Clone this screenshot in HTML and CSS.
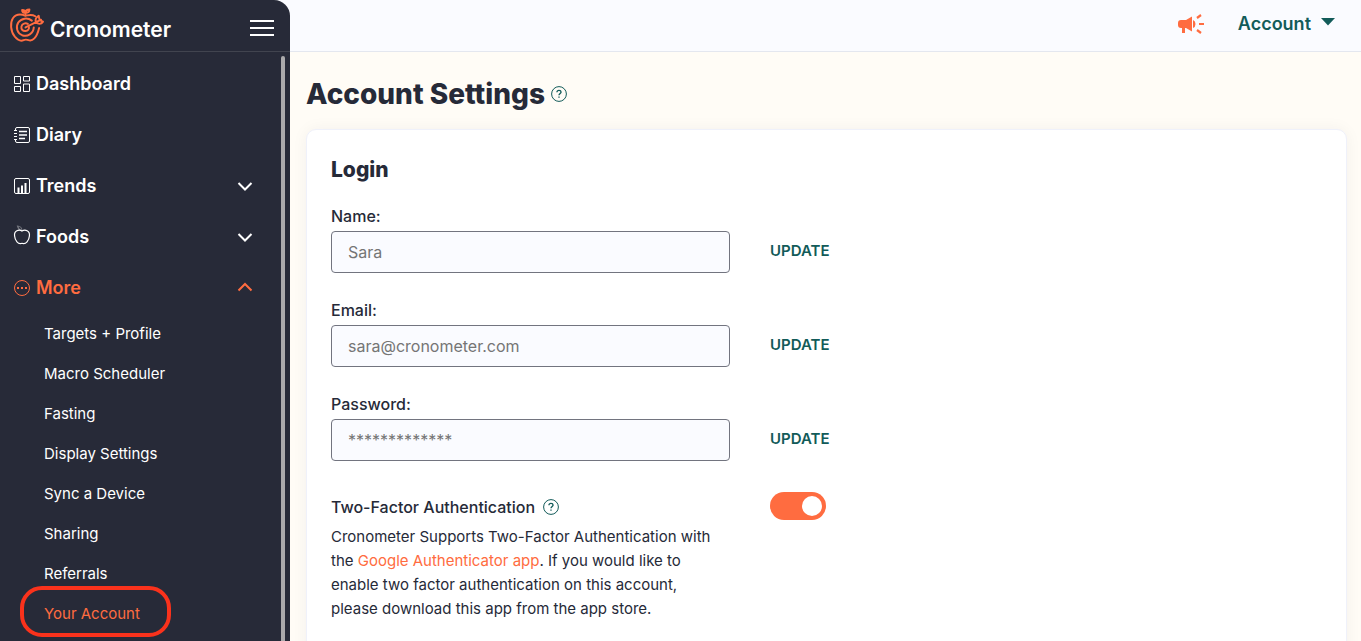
FILE: index.html
```
<!DOCTYPE html>
<html lang="en">
<head>
    <meta charset="UTF-8">
    <meta name="viewport" content="width=device-width, initial-scale=1.0">
    <title>Cronometer - Account Settings</title>
    <link rel="stylesheet" href="styles.css">
</head>
<body>
    <div class="app">
        <aside class="sidebar">
            <div class="sidebar-header">
                <a class="brand" href="#">
                    <svg class="brand-icon" viewBox="0 0 36 36" fill="none" stroke="currentColor" stroke-width="2" stroke-linecap="round" stroke-linejoin="round">
                        <path d="M27 8.5C23 6 20 7.5 17 8C12 6 7 6.500 4 10.500C1 15 1.500 24 6 29.500C9 33 12 34.500 15 33C17 32.200 18.500 32.500 20 33C24 34.500 28.500 31 31 20.500"/>
                        <path d="M17 7.500V4M17 5C14.500 5 13.500 3.500 13.500 2C15.500 2 17 3 17 5C17 3 18.500 1.500 21 1.500C21 3.500 19.500 5 17 5"/>
                        <path d="M23.500 13C19 9.500 12.500 10.500 9.500 15C6.500 20 8.500 26 13.500 28C19 30 25 26.500 25.500 20"/>
                        <path d="M19.500 16.500C17 14.800 13.500 16 12.800 19C12.200 22 14.500 24 17 23.700C19.500 23.300 21 21.500 20.500 19.500"/>
                        <path d="M17 20L33 12M28 14.500C26.500 12.500 27.500 9.500 30.500 8L31.500 12.500L35 14C33 17 30 17 28 14.500Z"/>
                    </svg>
                    <span>Cronometer</span>
                </a>
                <button class="menu-toggle" type="button" aria-label="Toggle menu">
                    <span></span>
                    <span></span>
                    <span></span>
                </button>
            </div>

            <nav class="nav">
                <a class="nav-item" href="#">
                    <svg class="nav-icon" viewBox="0 0 16 16" fill="none" stroke="currentColor">
                        <path d="M.5.500h6v7h-6zM9.500.500h6v4.500h-6zM.5 10.500h6v5h-6zM9.500 8h6v7.500h-6z"/>
                    </svg>
                    <span>Dashboard</span>
                </a>
                <a class="nav-item" href="#">
                    <svg class="nav-icon" viewBox="0 0 16 16" fill="none" stroke="currentColor">
                        <path d="M1.500 3V2Q1.500.500 3 .5H14Q15.500.500 15.500 2V14Q15.500 15.500 14 15.500H3Q1.500 15.500 1.500 14V13"/>
                        <path d="M0 3.500h3M0 6.500h3M0 9.500h3M0 12.500h3"/>
                        <path d="M5 4.500h8M5 8h8M5 11.500h6" stroke-width="1.600"/>
                    </svg>
                    <span>Diary</span>
                </a>
                <button class="nav-item" type="button">
                    <svg class="nav-icon" viewBox="0 0 16 16" fill="none" stroke="currentColor">
                        <rect x=".5" y=".5" width="15" height="15" rx="1.500"/>
                        <path d="M4.500 9.500V15M8 7.500V15M11.500 5V15" stroke-width="2"/>
                    </svg>
                    <span>Trends</span>
                    <svg class="chevron" viewBox="0 0 16 10" fill="none" stroke="currentColor" stroke-width="2"><path d="M1.500 2L8 8.500L14.500 2"/></svg>
                </button>
                <button class="nav-item" type="button">
                    <svg class="nav-icon" viewBox="0 0 16 16" fill="none" stroke="currentColor" stroke-width="1.200">
                        <path d="M8 2C5 0-.2 1.500.6 7C1 11.500 4 15.800 8 14.300C12 15.800 15 11.500 15.400 7C16.200 1.500 11 0 8 2Z"/>
                        <path d="M8 2C8 -1 6 -3 3.500 -3C4 -1 5.500 1 8 2" opacity=".35"/>
                    </svg>
                    <span>Foods</span>
                    <svg class="chevron" viewBox="0 0 16 10" fill="none" stroke="currentColor" stroke-width="2"><path d="M1.500 2L8 8.500L14.500 2"/></svg>
                </button>
                <button class="nav-item active" type="button" aria-expanded="true">
                    <svg class="nav-icon" viewBox="0 0 16 16" fill="none" stroke="currentColor">
                        <circle cx="8" cy="8" r="7.500"/>
                        <path d="M3 8h2M7 8h2M11 8h2" stroke-width="2"/>
                    </svg>
                    <span>More</span>
                    <svg class="chevron" viewBox="0 0 16 10" fill="none" stroke="currentColor" stroke-width="2"><path d="M1.500 7.500L8 1L14.500 7.500"/></svg>
                </button>
                <div class="subnav">
                    <a href="#">Targets + Profile</a>
                    <a href="#">Macro Scheduler</a>
                    <a href="#">Fasting</a>
                    <a href="#">Display Settings</a>
                    <a href="#">Sync a Device</a>
                    <a href="#">Sharing</a>
                    <a href="#">Referrals</a>
                    <a class="active" href="#">Your Account</a>
                </div>
            </nav>
            <div class="scroll-thumb"></div>
        </aside>

        <div class="page">
            <header class="topbar">
                <button class="news" type="button" aria-label="News">
                    <svg viewBox="0 0 26 20" fill="currentColor">
                        <path d="M3 6H8L14 2.500V17.500L8 14H7V19H4V14H3Q0 14 0 11V9Q0 6 3 6Z"/>
                        <path d="M15 6Q17.500 7 17.500 10T15 14Z"/>
                        <path d="M19 4L23 1M21 10H26M19 16L23 19" stroke="currentColor" stroke-width="2.200"/>
                    </svg>
                </button>
                <button class="account-menu" type="button">
                    <span>Account</span>
                    <svg viewBox="0 0 14 8" fill="currentColor"><path d="M0 0H14L7 7.500Z"/></svg>
                </button>
            </header>

            <main class="content">
                <div class="page-title">
                    <h1>Account Settings</h1>
                    <button class="help" type="button" aria-label="Help">
                        <svg viewBox="0 0 16 16" fill="none" stroke="currentColor"><circle cx="8" cy="8" r="7.400"/><path d="M5.900 6.300Q6 4.300 8 4.300T10.100 6.100C10.100 7.400 8 7.500 8 9.200M8 10.500V11.800" stroke-width="1.300"/></svg>
                    </button>
                </div>

                <section class="card">
                    <h2>Login</h2>
                    <form class="form">
                        <div class="field">
                            <label for="name">Name:</label>
                            <input type="text" id="name" placeholder="Sara">
                        </div>
                        <button class="update" type="button">UPDATE</button>

                        <div class="field">
                            <label for="email">Email:</label>
                            <input type="email" id="email" placeholder="sara@cronometer.com">
                        </div>
                        <button class="update" type="button">UPDATE</button>

                        <div class="field">
                            <label for="password">Password:</label>
                            <input type="password" id="password" placeholder="*************">
                        </div>
                        <button class="update" type="button">UPDATE</button>

                        <div class="two-factor">
                            <div class="two-factor-title">
                                <label for="two-factor">Two-Factor Authentication</label>
                                <button class="help" type="button" aria-label="Help">
                                    <svg viewBox="0 0 16 16" fill="none" stroke="currentColor"><circle cx="8" cy="8" r="7.400"/><path d="M5.900 6.300Q6 4.300 8 4.300T10.100 6.100C10.100 7.400 8 7.500 8 9.200M8 10.500V11.800" stroke-width="1.300"/></svg>
                                </button>
                            </div>
                            <p>Cronometer Supports Two-Factor Authentication with the <a href="#">Google Authenticator app</a>. If you would like to enable two factor authentication on this account, please download this app from the app store.</p>
                        </div>
                        <input class="switch" type="checkbox" id="two-factor" checked>
                    </form>
                </section>
            </main>
        </div>
    </div>
</body>
</html>
```
FILE: styles.css
```
* {
    margin: 0;
    padding: 0;
    box-sizing: border-box;
}

body {
    font-family: 'Inter', sans-serif;
    font-size: 15px;
    color: #262a38;
    background: #fffcf6;
}

button {
    font: inherit;
    color: inherit;
    background: none;
    border: none;
    cursor: pointer;
}

a {
    color: inherit;
    text-decoration: none;
}

svg {
    display: block;
    overflow: visible;
}

.app {
    display: flex;
    height: 100vh;
    overflow: hidden;
    background: linear-gradient(#fafbff 52px, #fffcf6 52px);
}

/* Sidebar */
.sidebar {
    position: relative;
    flex: 0 0 290px;
    overflow: hidden;
    color: #fff;
    background: #272a38;
    border-top-right-radius: 16px;
}

.sidebar-header {
    display: flex;
    justify-content: space-between;
    align-items: center;
    height: 52px;
    padding: 0 16px 0 9px;
    border-bottom: 1px solid #41444f;
}

.brand {
    display: flex;
    align-items: flex-end;
    gap: 6px;
    font-size: 21px;
    font-weight: 600;
    line-height: 26px;
}

.brand-icon {
    width: 35px;
    height: 35px;
    color: #ff6c40;
}

.menu-toggle {
    display: flex;
    flex-direction: column;
    gap: 5px;
    margin-top: 4px;
}

.menu-toggle span {
    width: 24px;
    height: 2px;
    background: #fff;
}

.nav {
    padding-top: 6px;
}

.nav-item {
    display: flex;
    align-items: center;
    gap: 6px;
    width: 100%;
    height: 51px;
    padding: 0 37px 0 14px;
    font-size: 18px;
    font-weight: 600;
}

.nav-icon {
    width: 16px;
    height: 16px;
}

.chevron {
    width: 16px;
    height: 10px;
    margin-left: auto;
}

.nav .active {
    color: #ff6c40;
}

.subnav a {
    display: flex;
    align-items: center;
    width: max-content;
    height: 40px;
    margin-left: 44px;
}

.subnav .active {
    position: relative;
}

/* ring around the current page */
.subnav .active::after {
    content: '';
    position: absolute;
    inset: -7px -31px -4px -24px;
    border: 4px solid #fa321c;
    border-radius: 22px;
}

.scroll-thumb {
    position: absolute;
    top: 56px;
    right: 5px;
    bottom: 0;
    width: 4px;
    background: #aaa9ab;
    border-radius: 2px 2px 0 0;
}

/* Page */
.page {
    flex: 1;
    min-width: 0;
}

.topbar {
    display: flex;
    justify-content: flex-end;
    align-items: center;
    gap: 34px;
    height: 52px;
    padding: 0 26px 4px 16px;
    border-bottom: 1px solid #e4e7ef;
}

.news {
    color: #ff6c40;
}

.news svg {
    width: 26px;
    height: 20px;
}

.account-menu {
    display: flex;
    align-items: center;
    gap: 10px;
    font-size: 18px;
    font-weight: 600;
    color: #125b59;
}

.account-menu svg {
    width: 14px;
    height: 8px;
    margin-bottom: 4px;
}

.content {
    padding: 24px 14px 0 16px;
}

.page-title {
    display: flex;
    align-items: center;
    gap: 6px;
    height: 36px;
    margin-bottom: 17px;
}

h1 {
    font-size: 28px;
    font-weight: 800;
}

.help {
    color: #125b59;
}

.help svg {
    width: 16px;
    height: 16px;
}

.card {
    min-height: 600px;
    padding: 28px 24px;
    background: #fff;
    border: 1px solid #eff1fa;
    border-radius: 10px;
    box-shadow: 0 0 16px rgba(38, 42, 56, 0.05);
}

h2 {
    margin-bottom: 22px;
    font-size: 21px;
    font-weight: 800;
    line-height: 24px;
}

.form {
    display: grid;
    grid-template-columns: minmax(0, 399px) auto;
    justify-content: start;
    column-gap: 40px;
    row-gap: 25px;
}

.field label,
.two-factor label {
    display: block;
    font-size: 16px;
    font-weight: 500;
    line-height: 24px;
}

.field input {
    display: block;
    width: 100%;
    height: 42px;
    margin-top: 3px;
    padding: 0 16px;
    font: inherit;
    font-size: 16px;
    color: #262a38;
    background: #fafbff;
    border: 1px solid #72747f;
    border-radius: 4px;
}

.field input::placeholder {
    color: #757575;
}

.update {
    height: 24px;
    margin-top: 34px;
    font-weight: 600;
    color: #125b59;
}

.two-factor {
    padding-top: 9px;
    line-height: 24px;
}

.two-factor-title {
    display: flex;
    align-items: center;
    gap: 8px;
    margin-bottom: 6px;
}

.two-factor p {
    padding-right: 8px;
}

.two-factor a {
    color: #ff6c40;
}

.switch {
    appearance: none;
    width: 56px;
    height: 28px;
    margin-top: 6px;
    padding: 4px;
    background: #ff6c40;
    border-radius: 14px;
    cursor: pointer;
}

.switch::before {
    content: '';
    display: block;
    width: 20px;
    height: 20px;
    background: #fff;
    border-radius: 50%;
}

.switch:checked::before {
    margin-left: auto;
}
```
